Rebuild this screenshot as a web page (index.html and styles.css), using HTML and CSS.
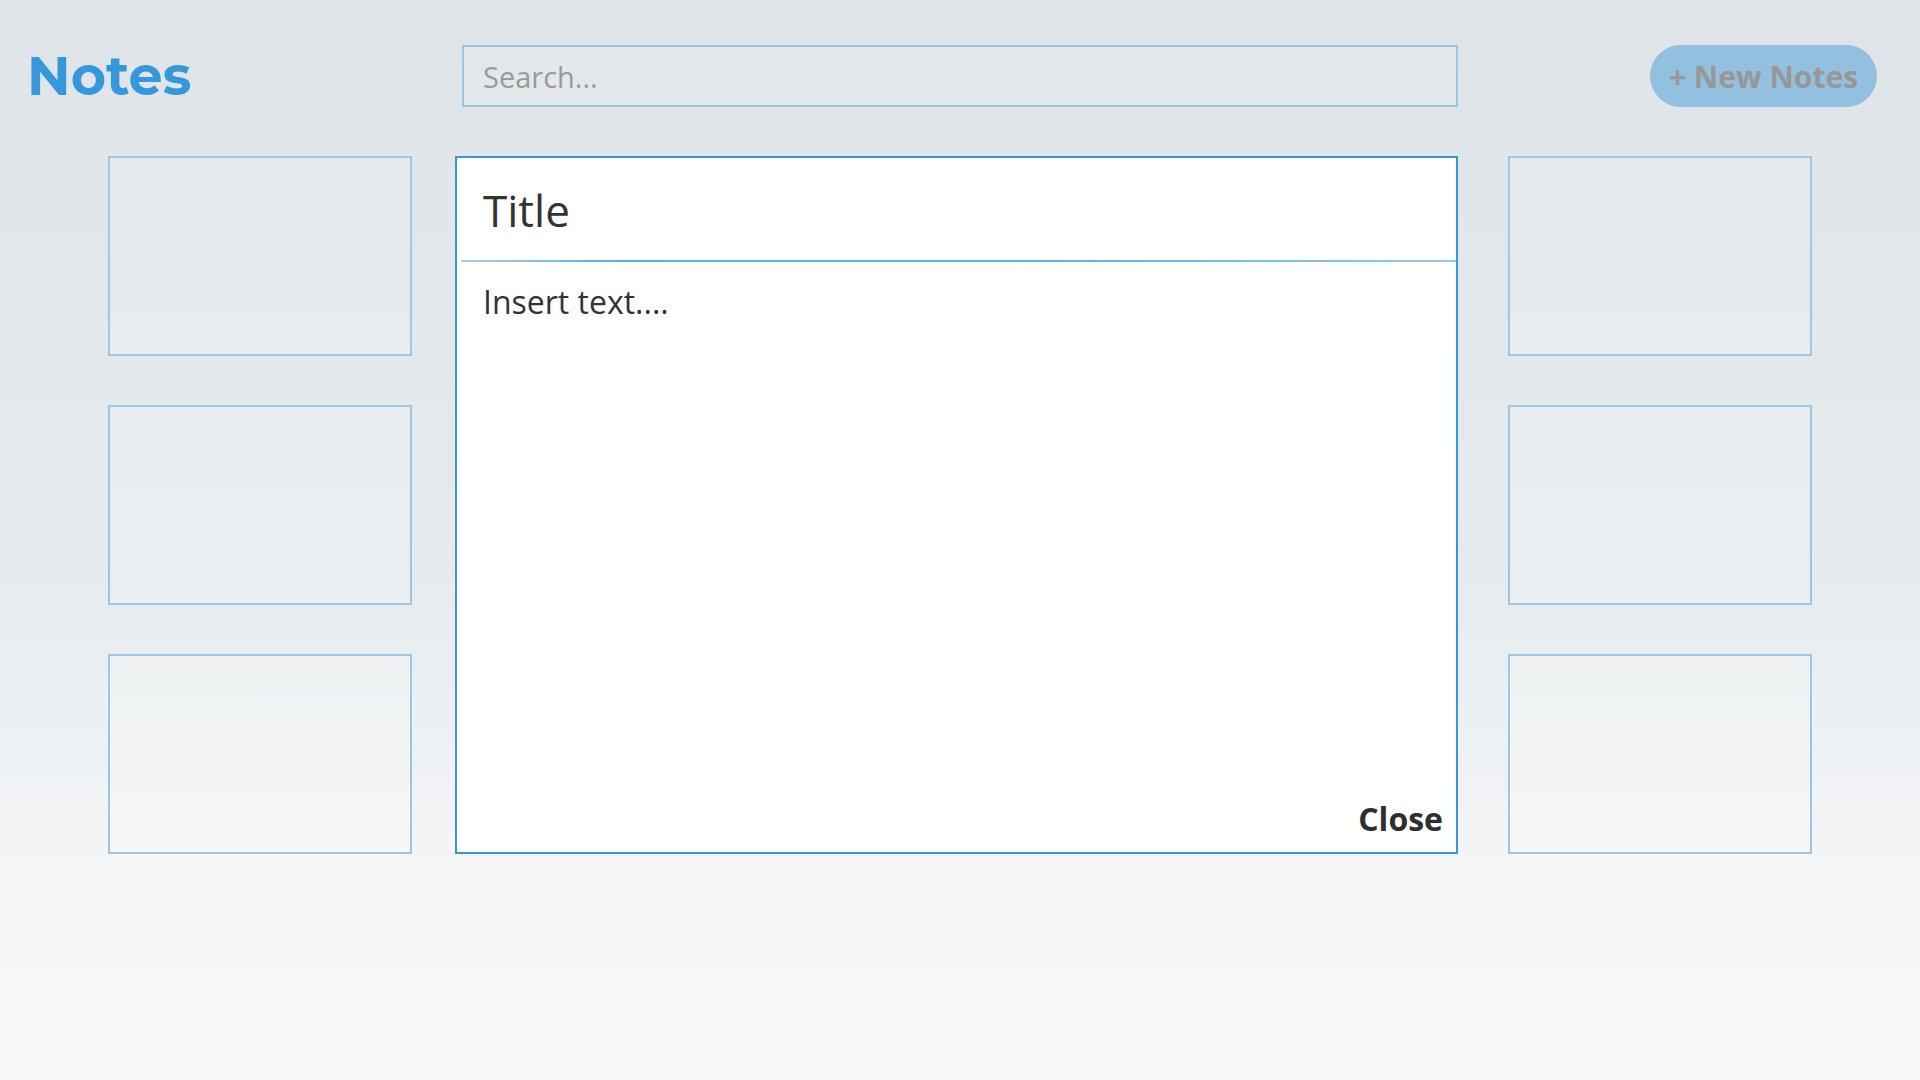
FILE: index.html
```html
<!DOCTYPE html>
<html lang="en">
<head>
<meta charset="utf-8">
<title>Notes</title>
<link rel="stylesheet" href="styles.css">
</head>
<body>
<div class="app">
  <header class="topbar">
    <h1 class="logo">Notes</h1>
    <input class="search" type="text" placeholder="Search...">
    <button class="new-btn">+ New Notes</button>
  </header>
  <main class="board">
    <div class="col">
      <div class="card"></div>
      <div class="card"></div>
      <div class="card"></div>
    </div>
    <section class="editor">
      <div class="title">Title</div>
      <div class="sep"></div>
      <div class="body">Insert text....</div>
      <div class="footer"><button class="close">Close</button></div>
    </section>
    <div class="col">
      <div class="card"></div>
      <div class="card"></div>
      <div class="card"></div>
    </div>
  </main>
</div>
</body>
</html>
```

FILE: styles.css
```css
* { box-sizing: border-box; }
html, body { margin: 0; height: 100%; }
body {
  font-family: "Open Sans", "Noto Sans", sans-serif;
  background: linear-gradient(180deg, #dee4e8 0%, #e6eaed 50%, #f3f5f7 80%, #f7f8fa 100%);
  width: 1920px;
  height: 1080px;
  overflow: hidden;
}
.app { width: 1920px; height: 1080px; }
.topbar {
  display: flex;
  align-items: center;
  height: 62px;
  margin-top: 45px;
  padding-left: 27px;
}
.logo {
  margin: 0;
  width: 435px;
  font-family: "Montserrat", "Lato", sans-serif;
  font-weight: 700;
  font-size: 54px;
  color: #3498db;
  line-height: 62px;
}
.search {
  width: 996px;
  height: 62px;
  border: 2px solid #9ac5e3;
  background: rgba(255,255,255,0.12);
  font-family: "Open Sans", sans-serif;
  font-size: 29px;
  padding: 0 0 0 19px;
  color: #333;
  outline: none;
}
.search::placeholder { color: #9a9a9a; }
.new-btn {
  margin-left: 192px;
  width: 227px;
  height: 62px;
  border: none;
  border-radius: 31px;
  background: #93c0df;
  color: #979797;
  font-family: "Open Sans", sans-serif;
  font-weight: 700;
  font-size: 30px;
  padding: 0;
}
.board {
  display: flex;
  align-items: flex-start;
  margin-top: 49px;
  padding-left: 108px;
}
.col {
  display: flex;
  flex-direction: column;
  gap: 49px;
  width: 304px;
}
.col:last-child { margin-left: 50px; }
.card {
  height: 200px;
  border: 2px solid #9cc8e6;
  background: rgba(255,255,255,0.2);
}
.editor {
  margin-left: 43px;
  width: 1003px;
  height: 698px;
  background: #fff;
  border: 2px solid #3498db;
  display: flex;
  flex-direction: column;
  color: #333;
}
.title {
  font-size: 44px;
  padding: 26px 0 0 26px;
  height: 102px;
  line-height: 52px;
}
.sep {
  margin-left: 4px;
  height: 2px;
  background: linear-gradient(90deg, #a8d0ec 0%, #5cafe6 15%, #5cb0e7 55%, #93c9ec 100%);
}
.body {
  font-size: 32px;
  padding: 18px 0 0 26px;
  line-height: 44px;
  flex: 1;
}
.footer {
  display: flex;
  justify-content: flex-end;
  padding: 0 13px 11px 0;
}
.close {
  border: none;
  background: none;
  font-family: "Open Sans", sans-serif;
  font-weight: 700;
  font-size: 32px;
  color: #2f2f2f;
  padding: 0;
  line-height: 44px;
}
```
